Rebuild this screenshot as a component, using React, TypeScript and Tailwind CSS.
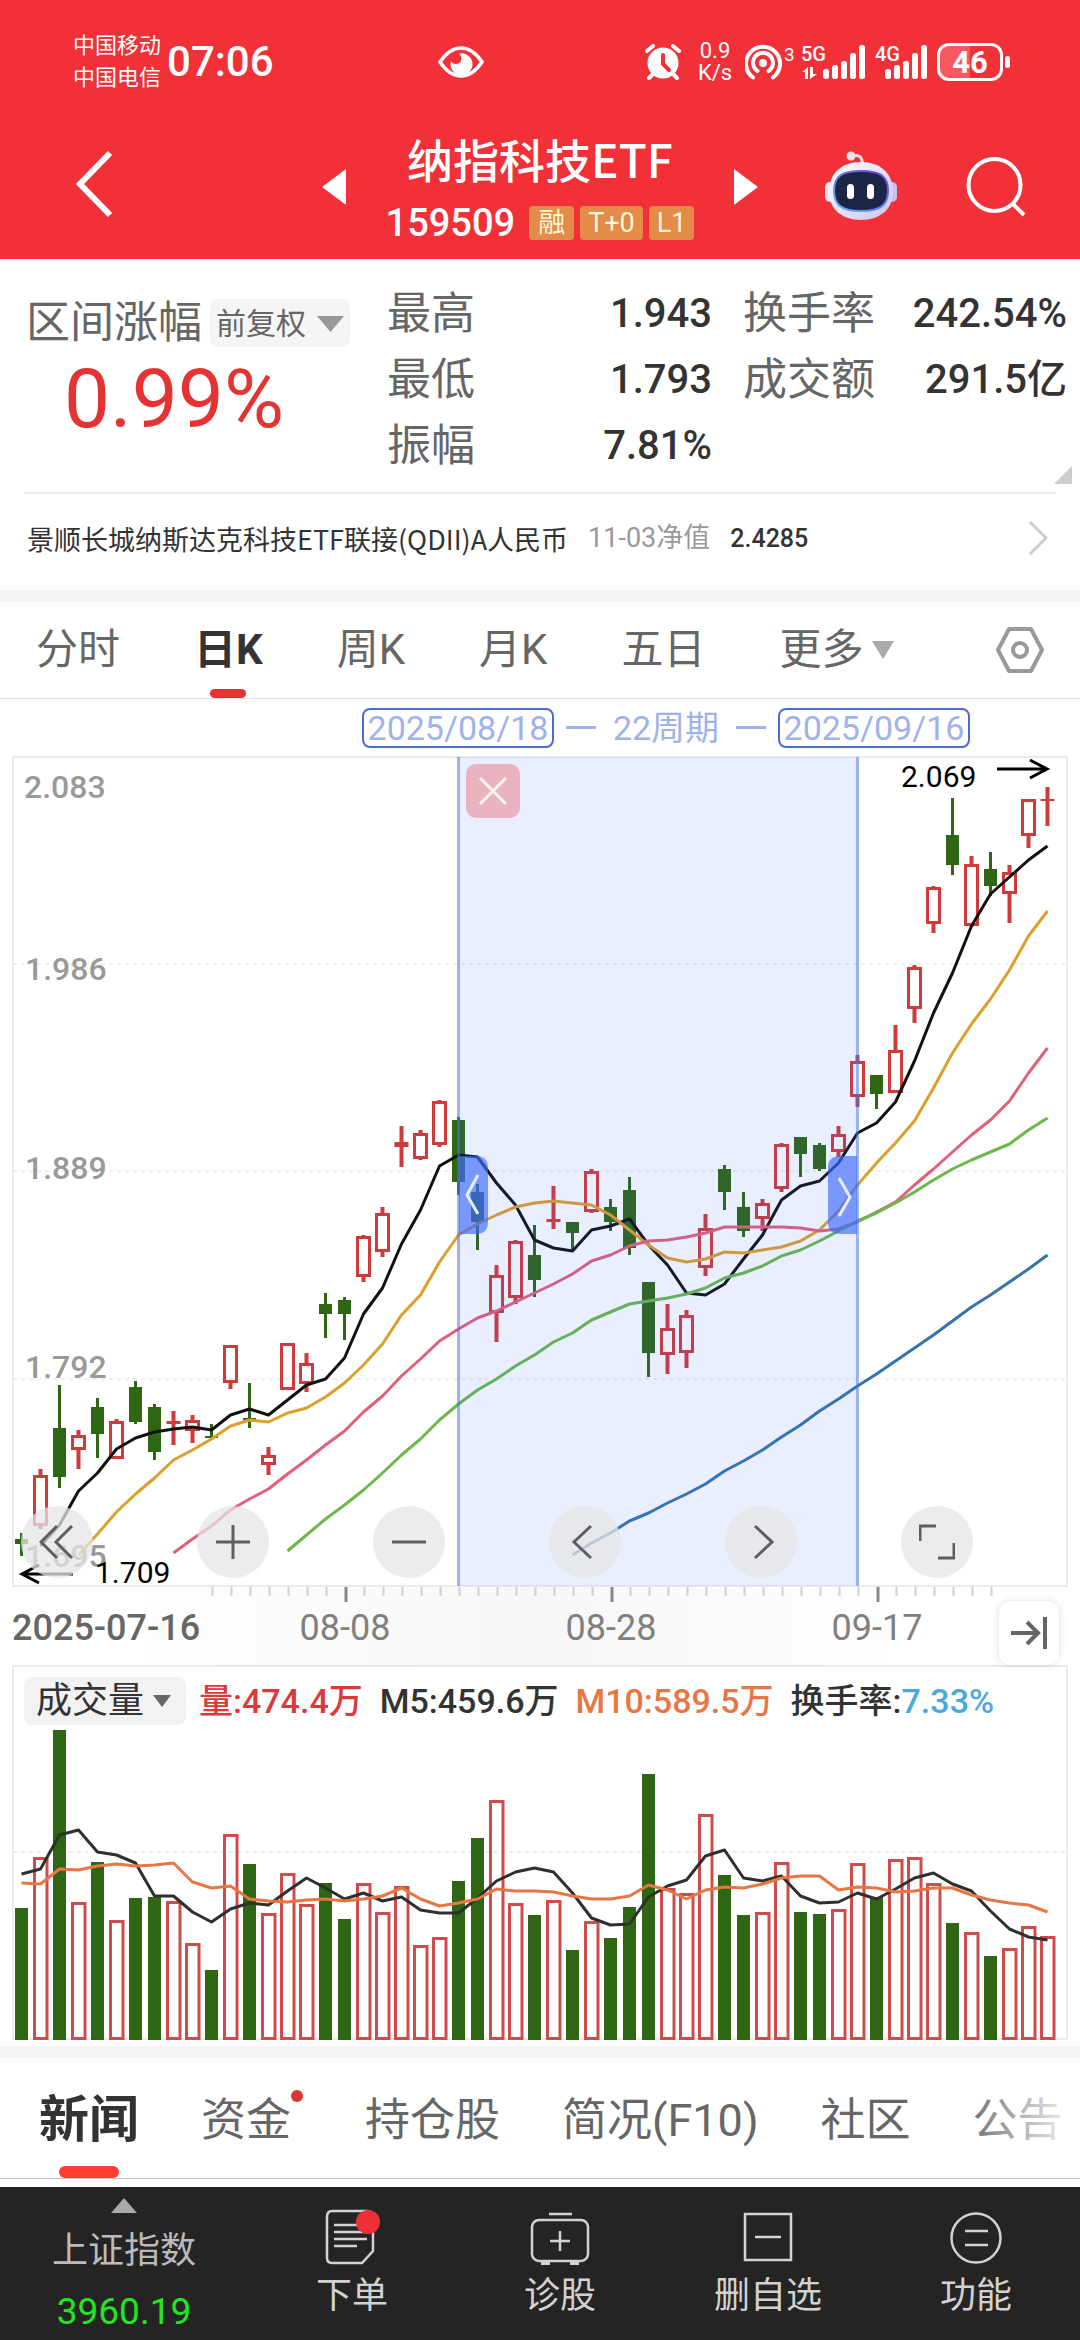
import React from 'react';

interface Candle {
    high: number;
    top: number;
    bottom: number;
    low: number;
    up: boolean;
    volume: number;
}

const UP = '#d03a3a';
const DOWN = '#2f6613';
const STEP = 19;
const FIRST = 21.5;

// high, body top, body bottom, low, rising, volume bar top
const rows: [number, number, number, number, number, number][] = [
    [777, 783, 788, 800, 0, 183],
    [713, 719, 770, 773, 1, 132],
    [629, 672, 721, 732, 0, 5],
    [674, 679, 694, 713, 1, 177],
    [642, 651, 678, 702, 0, 137],
    [663, 665, 703, 703, 1, 195],
    [625, 631, 666, 668, 0, 173],
    [648, 651, 696, 704, 0, 172],
    [655, 665, 668, 689, 1, 176],
    [659, 664, 675, 687, 1, 218],
    [668, 680, 682, 684, 0, 245],
    [589, 589, 627, 633, 1, 109],
    [627, 662, 664, 672, 0, 139],
    [691, 699, 709, 719, 1, 188],
    [587, 587, 634, 634, 1, 148],
    [597, 607, 628, 636, 1, 179],
    [537, 548, 558, 582, 0, 158],
    [541, 544, 558, 584, 0, 194],
    [479, 480, 521, 526, 1, 158],
    [451, 457, 496, 501, 1, 187],
    [370, 386, 391, 411, 1, 161],
    [374, 377, 403, 404, 1, 220],
    [344, 345, 389, 391, 1, 212],
    [361, 364, 426, 439, 0, 156],
    [428, 436, 466, 494, 0, 113],
    [509, 519, 557, 586, 1, 75],
    [484, 485, 542, 548, 1, 178],
    [469, 499, 524, 541, 0, 190],
    [430, 463, 466, 473, 1, 175],
    [466, 466, 477, 495, 0, 225],
    [413, 415, 456, 457, 1, 196],
    [443, 451, 466, 475, 0, 213],
    [421, 434, 492, 499, 0, 182],
    [526, 526, 597, 621, 0, 49],
    [548, 572, 599, 618, 1, 163],
    [554, 559, 597, 612, 1, 168],
    [458, 472, 512, 520, 1, 89],
    [409, 413, 436, 454, 0, 150],
    [436, 451, 475, 481, 0, 190],
    [443, 447, 463, 475, 1, 187],
    [387, 388, 433, 436, 1, 137],
    [381, 381, 398, 421, 0, 187],
    [387, 389, 413, 415, 0, 189],
    [370, 378, 396, 401, 1, 184],
    [299, 305, 341, 351, 1, 138],
    [319, 319, 338, 353, 0, 172],
    [269, 294, 337, 337, 1, 134],
    [209, 211, 253, 267, 1, 132],
    [130, 131, 168, 177, 1, 158],
    [42, 79, 109, 119, 0, 198],
    [100, 108, 170, 171, 1, 207],
    [96, 113, 130, 140, 0, 231],
    [109, 116, 138, 167, 1, 223],
    [43, 43, 80, 92, 1, 201],
    [31, 43, 45, 70, 1, 211],
];

const candles: Candle[] = rows.map(([high, top, bottom, low, up, volume]) => ({
    high,
    top,
    bottom,
    low,
    up: up === 1,
    volume,
}));

const averages = [
    {
        color: '#111111',
        start: 1,
        points: [
            790, 769, 735, 717, 693, 682, 676, 673, 671, 674, 659, 653, 659, 644, 629, 623, 602, 558, 532, 488, 454, 410,
            399, 401, 427, 449, 484, 492, 495, 474, 470, 463, 489, 509, 537, 539, 528, 503, 479, 444, 430, 425, 407, 377,
            367, 346, 305, 257, 217, 170, 138, 121, 104, 90,
        ],
    },
    {
        color: '#dd9f2b',
        start: 3,
        points: [
            799, 778, 756, 738, 722, 704, 694, 683, 670, 664, 666, 657, 652, 641, 627, 609, 588, 559, 539, 506, 479, 468,
            459, 451, 447, 445, 447, 449, 459, 474, 489, 502, 506, 503, 496, 497, 494, 491, 485, 474, 455, 429, 407, 387,
            365, 332, 297, 268, 243, 214, 180, 155,
        ],
    },
    {
        color: '#e0607a',
        start: 8,
        points: [
            797, 783, 770, 754, 743, 733, 718, 704, 689, 675, 656, 640, 620, 603, 585, 573, 562, 555, 546, 537, 528, 518,
            505, 499, 490, 485, 484, 481, 477, 471, 471, 471, 471, 472, 475, 473, 466, 456, 446, 429, 413, 396, 379, 364,
            345, 317, 292,
        ],
    },
    {
        color: '#6cb84c',
        start: 14,
        points: [
            795, 779, 763, 749, 734, 717, 699, 683, 664, 648, 634, 623, 610, 599, 586, 577, 564, 556, 548, 545, 542, 538,
            532, 522, 517, 510, 500, 494, 485, 475, 465, 457, 447, 436, 424, 413, 404, 396, 388, 374, 362,
        ],
    },
    {
        color: '#3674ab',
        start: 29,
        points: [
            799, 787, 777, 765, 757, 747, 738, 728, 715, 705, 694, 681, 669, 655, 643, 630, 618, 605, 592, 579, 565, 551,
            539, 526, 513, 499,
        ],
    },
];

const volumeAverages = [
    {
        color: '#2f2f2f',
        start: 0,
        points: [
            149, 144, 110, 105, 127, 130, 138, 171, 171, 187, 197, 184, 178, 180, 166, 153, 163, 174, 168, 176, 172, 185,
            188, 188, 173, 156, 147, 143, 147, 168, 193, 200, 199, 172, 161, 155, 131, 125, 153, 156, 151, 171, 178, 177,
            168, 174, 164, 153, 148, 159, 166, 186, 204, 212, 215,
        ],
    },
    {
        color: '#e87644',
        start: 0,
        points: [
            158, 159, 144, 145, 141, 139, 141, 140, 138, 157, 163, 161, 174, 176, 177, 175, 174, 176, 174, 171, 163, 174,
            181, 178, 174, 164, 166, 166, 167, 171, 174, 174, 171, 160, 165, 174, 165, 162, 163, 159, 153, 151, 151, 165,
            162, 163, 167, 166, 163, 163, 170, 175, 178, 180, 187,
        ],
    },
];

const xAt = (i: number) => FIRST + i * STEP;

const toPoints = (start: number, points: number[]) => points.map((y, i) => `${xAt(start + i)},${y}`).join(' ');

function SignalBars({ label, arrows = false }: { label: string; arrows?: boolean }) {
    const x = arrows ? 22 : 10;
    return (
        <svg className={arrows ? 'w-[66px] h-[40px]' : 'w-[54px] h-[40px]'} viewBox={arrows ? '0 0 66 40' : '0 0 54 40'} fill="white">
            <text x="0" y="19" fontSize="20" fontWeight="500">{label}</text>
            {arrows && <path d="M1 30l6-5v12H4v-7zM9 25h3v7h4l-7 5z" />}
            {[10, 14, 18, 26, 34].map((h, i) => (
                <rect key={h} x={x + i * 9} y={37 - h} width="6" height={h} rx="2.5" />
            ))}
        </svg>
    );
}

function StatusBar() {
    return (
        <div className="flex items-center h-[124px] pl-[73px] pr-[70px] text-white">
            <div className="text-[22px] leading-8">
                <p>中国移动</p>
                <p>中国电信</p>
            </div>
            <span className="ml-[6px] text-[42px] leading-none font-medium">07:06</span>
            <svg className="ml-[164px] w-[46px] h-[32px]" viewBox="0 0 46 32" fill="none">
                <path d="M2 16C8 7 15 2 23 2s15 5 21 14c-6 9-13 14-21 14S8 25 2 16z" stroke="white" strokeWidth="3.5" />
                <path d="M21 7.500a11 11 0 1 1-8 7.500c1 4 9 4 10 0 1-3 0-6-2-7.500z" fill="white" />
            </svg>
            <div className="ml-auto flex items-center">
                <svg className="w-[36px] h-[36px]" viewBox="0 0 36 36" fill="none" stroke="white" strokeLinecap="round">
                    <circle cx="18" cy="19" r="15.500" fill="white" stroke="none" />
                    <path d="M2 7l6-5M34 7l-6-5M4 34l5-5M32 34l-5-5" strokeWidth="4" />
                    <path d="M18 11v9l6 6" stroke="#f23038" strokeWidth="4" />
                </svg>
                <div className="ml-4 w-9 text-center text-[22px] leading-[22px]">
                    <p>0.9</p>
                    <p>K/s</p>
                </div>
                <svg className="ml-3 w-[56px] h-[40px]" viewBox="0 0 56 40" fill="none" stroke="white" strokeWidth="4" strokeLinecap="round">
                    <circle cx="18" cy="21" r="4" fill="white" stroke="none" />
                    <path d="M12.500 29a10 10 0 1 1 11 0M8 35.500a17 17 0 1 1 20 0" />
                    <text x="39" y="19" fontSize="19" fill="white" stroke="none">3</text>
                </svg>
                <SignalBars label="5G" arrows />
                <span className="w-2" />
                <SignalBars label="4G" />
                <div className="ml-2 relative flex items-center justify-center w-[66px] h-[38px] rounded-xl border-3 border-white overflow-hidden bg-linear-to-r from-white/20 from-50% to-transparent to-50% text-[31px] leading-none font-bold">
                    46
                </div>
                <span className="w-[5px] h-3 ml-[2px] rounded-sm bg-white" />
            </div>
        </div>
    );
}

function Header() {
    return (
        <header className="bg-[#f23038]">
            <StatusBar />
            <div className="grid grid-cols-[1fr_auto_1fr] items-center h-[135px] pb-4 text-white">
                <button type="button" aria-label="返回" className="ml-[75px] justify-self-start">
                    <svg className="w-[38px] h-[68px]" viewBox="0 0 38 68" fill="none" stroke="white" strokeWidth="6">
                        <path d="M35 3L5 34l30 31" />
                    </svg>
                </button>
                <div className="flex items-center gap-10 pt-[6px]">
                    <button type="button" aria-label="上一只">
                        <svg className="w-6 h-9" viewBox="0 0 24 36" fill="white"><path d="M24 0v36L0 18z" /></svg>
                    </button>
                    <div className="flex flex-col items-center gap-[22px]">
                        <h1 className="font-['Noto_Sans_CJK_SC',sans-serif] text-[46px] leading-[50px] font-medium">纳指科技ETF</h1>
                        <div className="flex items-center gap-[6px]">
                            <span className="mr-2 text-[38px] leading-9 font-medium">159509</span>
                            <span className="px-[9px] rounded bg-[#e28c48] text-[#fff6dc] text-[27px] leading-[34px]">融</span>
                            <span className="px-2 rounded bg-[#e28c48] text-[#fff6dc] text-[27px] leading-[34px]">T+0</span>
                            <span className="px-2 rounded bg-[#e28c48] text-[#fff6dc] text-[27px] leading-[34px]">L1</span>
                        </div>
                    </div>
                    <button type="button" aria-label="下一只">
                        <svg className="w-6 h-9" viewBox="0 0 24 36" fill="white"><path d="M0 0v36l24-18z" /></svg>
                    </button>
                </div>
                <div className="flex items-center justify-between pl-[67px] pr-[54px] pt-1">
                    <button type="button" aria-label="智能助手">
                        <svg className="w-[72px] h-[70px]" viewBox="0 0 72 70" fill="none">
                            <defs>
                                <linearGradient id="shell" x1="0" y1="0" x2="1" y2="1">
                                    <stop offset="0" stopColor="#ffffff" />
                                    <stop offset="1" stopColor="#c9c6f2" />
                                </linearGradient>
                                <linearGradient id="rim" x1="0" y1="1" x2="1" y2="0">
                                    <stop offset="0" stopColor="#5fb4f5" />
                                    <stop offset="1" stopColor="#6a3fd8" />
                                </linearGradient>
                            </defs>
                            <path d="M27 5c8-2 11 2 10 9" stroke="#eedff0" strokeWidth="3" />
                            <circle cx="26" cy="5" r="4.500" fill="#f5dde8" />
                            <rect x="0" y="31" width="10" height="20" rx="5" fill="#e4e6fb" />
                            <rect x="62" y="31" width="10" height="20" rx="5" fill="#cdbdf0" />
                            <path d="M36 11c20 0 32 12 32 30 0 17-13 28-32 28S4 58 4 41c0-18 12-30 32-30z" fill="url(#shell)" />
                            <path d="M36 20c19 0 27 5 27 20s-9 20-27 20-27-5-27-20 8-20 27-20z" fill="#1d2547" stroke="url(#rim)" strokeWidth="2" />
                            <rect x="22" y="33" width="7" height="15" rx="3.500" fill="white" />
                            <rect x="42" y="33" width="7" height="15" rx="3.500" fill="white" />
                        </svg>
                    </button>
                    <button type="button" aria-label="搜索">
                        <svg className="w-[60px] h-[62px]" viewBox="0 0 60 62" fill="none" stroke="white" strokeWidth="4">
                            <circle cx="28.500" cy="30" r="26" />
                            <path d="M47 49l11 11" />
                        </svg>
                    </button>
                </div>
            </div>
        </header>
    );
}

function Stat({ label, value }: { label: string; value: string }) {
    return (
        <div className="flex items-center justify-between h-[66px]">
            <dt className="text-[44px] leading-none text-[#666]">{label}</dt>
            <dd className="text-[40px] leading-none font-medium text-[#333]">{value}</dd>
        </div>
    );
}

function Summary() {
    return (
        <section className="bg-white">
            <div className="relative flex items-start pl-[26px] pr-[13px] pt-[22px] h-[233px]">
                <div className="w-[324px] pt-[18px]">
                    <div className="flex items-center justify-between">
                        <span className="text-[44px] leading-[46px] text-[#666]">区间涨幅</span>
                        <div className="relative">
                            <select aria-label="复权方式" className="appearance-none w-[140px] h-12 pl-[6px] rounded-lg bg-[#f5f5f5] text-[30px] text-[#666]">
                                <option>前复权</option>
                            </select>
                            <svg className="absolute right-[6px] top-[17px] w-[27px] h-4 pointer-events-none" viewBox="0 0 27 16" fill="#999">
                                <path d="M0 0h27L13.500 16z" />
                            </svg>
                        </div>
                    </div>
                    <p className="mt-[14px] pr-7 text-center text-[82px] leading-[76px] text-[#e33333]">0.99%</p>
                </div>
                <dl className="w-[325px] ml-[37px]">
                    <Stat label="最高" value="1.943" />
                    <Stat label="最低" value="1.793" />
                    <Stat label="振幅" value="7.81%" />
                </dl>
                <dl className="flex-1 ml-[31px]">
                    <Stat label="换手率" value="242.54%" />
                    <Stat label="成交额" value="291.5亿" />
                </dl>
                <svg className="absolute right-2 bottom-2 w-[18px] h-[18px]" viewBox="0 0 18 18" fill="#ccc"><path d="M18 0v18H0z" /></svg>
            </div>
            <a href="#fund" className="flex items-center h-[98px] mx-6 border-t-2 border-[#ececec] pl-[3px] pr-2 pb-2 text-[27px] leading-none">
                <span className="font-['Noto_Sans_CJK_SC',sans-serif] text-[#333]">景顺长城纳斯达克科技ETF联接(QDII)A人民币</span>
                <span className="ml-5 text-[#999]">11-03净值</span>
                <span className="ml-5 text-[25px] font-medium text-[#333]">2.4285</span>
                <svg className="ml-auto w-5 h-9" viewBox="0 0 20 36" fill="none" stroke="#ccc" strokeWidth="3"><path d="M2 2l16 16L2 34" /></svg>
            </a>
        </section>
    );
}

function PeriodTabs() {
    return (
        <nav className="flex items-center h-[97px] pl-9 pr-9 gap-[74px] border-b border-[#e2e2e2] text-[42px] leading-none whitespace-nowrap text-[#666]">
            <button type="button">分时</button>
            <button type="button" className="relative flex flex-col items-center justify-center h-full font-bold text-[#333]">
                日K
                <span className="absolute bottom-0 w-9 h-[9px] rounded-full bg-[#e33333]" />
            </button>
            <button type="button">周K</button>
            <button type="button">月K</button>
            <button type="button">五日</button>
            <button type="button" className="flex items-center gap-2">
                更多
                <svg className="w-6 h-5" viewBox="0 0 24 20" fill="#aaa"><path d="M1 1h22L12 19z" /></svg>
            </button>
            <button type="button" aria-label="设置" className="ml-auto">
                <svg className="w-12 h-12" viewBox="0 0 48 48" fill="none" stroke="#999" strokeWidth="4" strokeLinejoin="round">
                    <path d="M13 3h22l11 21-11 21H13L2 24z" />
                    <circle cx="24" cy="24" r="7" />
                </svg>
            </button>
        </nav>
    );
}

function RangeBar() {
    return (
        <div className="flex items-center h-[57px] pl-[362px] gap-3 text-[34px] leading-none text-[#9fb2ea]">
            <button type="button" className="w-[192px] h-10 rounded-lg border-2 border-[#4a6ccb]">2025/08/18</button>
            <span className="w-[30px] h-[3px] bg-[#9fb2ea]" />
            <span className="w-[116px] text-center">22周期</span>
            <span className="w-[30px] h-[3px] bg-[#9fb2ea]" />
            <button type="button" className="w-[192px] h-10 rounded-lg border-2 border-[#4a6ccb]">2025/09/16</button>
        </div>
    );
}

function CandleShape({ candle, x }: { candle: Candle; x: number }) {
    const { high, top, bottom, low, up } = candle;
    if (!up) {
        return (
            <g fill={DOWN}>
                <rect x={x - 1.5} y={high} width="3" height={low - high} />
                <rect x={x - 6.5} y={top} width="13" height={bottom - top} />
            </g>
        );
    }
    // a thin body is drawn as a cross
    if (bottom - top < 6) {
        return (
            <g fill={UP}>
                <rect x={x - 2} y={high} width="4" height={low - high} />
                <rect x={x - 7} y={top} width="14" height={bottom - top} />
            </g>
        );
    }
    return (
        <g fill={UP}>
            <rect x={x - 2} y={high} width="4" height={top - high} />
            <rect x={x - 2} y={bottom} width="4" height={low - bottom} />
            <rect x={x - 6} y={top + 1.5} width="12" height={bottom - top - 3} fill="none" stroke={UP} strokeWidth="3" />
        </g>
    );
}

function PriceChart() {
    return (
        <div className="relative">
            <svg className="block w-full" viewBox="0 0 1080 831" fill="none">
                <rect x="13" y="1" width="1054" height="829" stroke="#ebebeb" strokeWidth="2" />
                {[208, 415, 623].map((y) => (
                    <path key={y} d={`M13 ${y}H1067`} stroke="#dfdfdf" strokeDasharray="4 4" />
                ))}
                <g fill="#999" fontSize="32" fontWeight="500">
                    <text x="24" y="42">2.083</text>
                    <text x="25" y="224">1.986</text>
                    <text x="25" y="423">1.889</text>
                    <text x="25" y="622">1.792</text>
                    <text x="25" y="811">1.695</text>
                </g>
                {candles.map((candle, i) => (
                    <CandleShape key={i} candle={candle} x={xAt(i)} />
                ))}
                {averages.map((line) => (
                    <polyline key={line.color} points={toPoints(line.start, line.points)} stroke={line.color} strokeWidth="3" strokeLinejoin="round" />
                ))}
                <g fill="black" fontSize="30">
                    <text x="901" y="31">2.069</text>
                    <text x="95" y="827">1.709</text>
                </g>
                <path d="M997 13h50M1030 4l17 9-17 9M73 818H22M39 809l-17 9 17 9" stroke="black" strokeWidth="3" />

                {/* Selected range */}
                <rect x="458" y="1" width="400" height="829" fill="#3c6eff" fillOpacity="0.11" />
                <path d="M458.500 1v829M857.500 1v829" stroke="#4474e6" strokeOpacity="0.5" strokeWidth="3" />
                <path d="M459 400h17q12 0 12 12v54q0 12-12 12h-17z" fill="#3c68ff" fillOpacity="0.65" />
                <path d="M857 400h-17q-12 0-12 12v54q0 12 12 12h17z" fill="#3c68ff" fillOpacity="0.65" />
                <path d="M478 419l-11 20 11 19M839 422l11 19-11 19" stroke="#e6edff" strokeWidth="3" />
            </svg>
            <button type="button" aria-label="关闭区间" className="absolute left-[466px] top-2 flex items-center justify-center size-[54px] rounded-[10px] bg-[#e9b4c0]">
                <svg className="size-7" viewBox="0 0 28 28" stroke="#fff4ee" strokeWidth="3"><path d="M1 1l26 26M27 1L1 27" /></svg>
            </button>
            <div className="absolute left-[21px] bottom-[9px] flex gap-[104px]">
                {controls.map(({ label, path }) => (
                    <button key={label} type="button" aria-label={label} className="flex items-center justify-center size-[72px] rounded-full bg-[#e5e5e5]/75">
                        <svg className="size-9" viewBox="0 0 36 36" fill="none" stroke="#5e5e5e" strokeWidth="3">
                            <path d={path} />
                        </svg>
                    </button>
                ))}
            </div>
        </div>
    );
}

const controls = [
    { label: '最早', path: 'M18 2L2 18l16 16M33 2L17 18l16 16' },
    { label: '放大', path: 'M18 1v34M1 18h34' },
    { label: '缩小', path: 'M1 18h34' },
    { label: '左移', path: 'M24 2L7 18l17 16' },
    { label: '右移', path: 'M12 2l17 16-17 16' },
    { label: '全屏', path: 'M17 2H1v15M19 34h16V19' },
];

function TimeAxis() {
    const ticks = Array.from({ length: 42 }, (_, i) => i + 10);
    return (
        <div className="relative bg-linear-to-r from-white from-10% via-[#f7f7f7] to-white to-85%">
            <svg className="block w-full" viewBox="0 0 1080 78">
                {ticks.map((i) =>
                    [17, 31, 45].includes(i) ? (
                        <rect key={i} x={xAt(i)} y="0" width="3" height="15" fill="#888" />
                    ) : (
                        <rect key={i} x={xAt(i)} y="0" width="2" height="9" fill="#d0d0d0" />
                    ),
                )}
                <text x="12" y="53" fontSize="36" fontWeight="500" fill="#666">2025-07-16</text>
                <g fontSize="36" fill="#808080" textAnchor="middle">
                    <text x="345" y="53">08-08</text>
                    <text x="611" y="53">08-28</text>
                    <text x="877" y="53">09-17</text>
                </g>
            </svg>
            <button type="button" aria-label="跳到最新" className="absolute right-[21px] top-[14px] flex items-center justify-center w-[60px] h-[64px] rounded-xl bg-white shadow-[0_0_8px_rgba(0,0,0,0.12)]">
                <svg className="w-9 h-8" viewBox="0 0 36 32" fill="none" stroke="#666" strokeWidth="4">
                    <path d="M0 16h26M16 5l11 11-11 11M34 0v32" />
                </svg>
            </button>
        </div>
    );
}

function VolumeChart() {
    return (
        <section className="pb-[6px]">
            <div className="mx-[12px] h-[60px] flex items-end border-t-2 border-x-2 border-[#ebebeb] pl-[10px] text-[34px] leading-[48px] font-medium whitespace-nowrap text-[#333]">
                <div className="relative">
                    <select aria-label="指标" className="appearance-none block w-[162px] h-12 pl-3 rounded-lg bg-[#f2f2f2] text-[36px] font-normal">
                        <option>成交量</option>
                    </select>
                    <svg className="absolute right-[15px] top-[18px] w-[18px] h-3 pointer-events-none" viewBox="0 0 18 12" fill="#666">
                        <path d="M0 0h18L9 12z" />
                    </svg>
                </div>
                <span className="ml-[13px] text-[#d93a3a]">量:474.4万</span>
                <span className="ml-[17px]">M5:459.6万</span>
                <span className="ml-[17px] text-[#e87644]">M10:589.5万</span>
                <span className="ml-[17px]">换手率:<span className="text-[#4ba8dd]">7.33%</span></span>
            </div>
            <svg className="block w-full" viewBox="0 0 1080 315" fill="none">
                <path d="M13 0v314h1054V0" stroke="#ebebeb" strokeWidth="2" />
                <path d="M13 127H1067" stroke="#dcdcdc" strokeDasharray="4 4" />
                {candles.map(({ up, volume }, i) =>
                    up ? (
                        <rect key={i} x={xAt(i) - 6} y={volume + 1.5} width="12.500" height={312 - volume} stroke="#cf4c4c" strokeWidth="3" />
                    ) : (
                        <rect key={i} x={xAt(i) - 6.5} y={volume} width="13" height={315 - volume} fill={DOWN} />
                    ),
                )}
                {volumeAverages.map((line) => (
                    <polyline key={line.color} points={toPoints(line.start, line.points)} stroke={line.color} strokeWidth="3" strokeLinejoin="round" />
                ))}
            </svg>
        </section>
    );
}

function SectionTabs() {
    return (
        <nav className="relative flex items-center h-[121px] pl-[39px] pt-1 gap-[62px] overflow-hidden whitespace-nowrap border-b border-[#c4c4c4] text-[45px] leading-none text-[#666]">
            <button type="button" className="relative flex items-center justify-center h-full text-[50px] font-bold text-[#333]">
                新闻
                <span className="absolute bottom-0 w-[60px] h-3 rounded-full bg-[#fc3d32]" />
            </button>
            <button type="button" className="relative mr-3">
                资金
                <span className="absolute -right-3 -top-2 size-3 rounded-full bg-[#dd3333]" />
            </button>
            <button type="button">持仓股</button>
            <button type="button">简况(F10)</button>
            <button type="button">社区</button>
            <button type="button">公告</button>
            <span className="absolute right-0 top-0 w-[120px] h-full bg-linear-to-r from-white/0 to-white pointer-events-none" />
        </nav>
    );
}

function BottomBar() {
    return (
        <footer className="mt-2 flex h-[153px] bg-[#242424] text-[36px] leading-none text-[#d2d2d2]">
            <button type="button" className="flex flex-col items-center w-[248px] pt-[11px] text-[#bbb]">
                <svg className="w-[26px] h-[15px]" viewBox="0 0 26 15" fill="#aaa"><path d="M13 0l13 15H0z" /></svg>
                <span className="mt-5">上证指数</span>
                <span className="mt-6 text-[37px] text-[#22e622]">3960.19</span>
            </button>
            <div className="flex-1 grid grid-cols-4">
                {actions.map(({ label, icon }) => (
                    <button key={label} type="button" className="flex flex-col items-center pt-[21px]">
                        <svg className="w-[60px] h-[58px]" viewBox="0 0 60 58" fill="none" stroke="#d2d2d2" strokeWidth="2.500">
                            {icon}
                        </svg>
                        <span className="mt-3">{label}</span>
                    </button>
                ))}
            </div>
        </footer>
    );
}

const actions = [
    {
        label: '下单',
        icon: (
            <>
                <path d="M10 3h35q6 0 6 6v34L40 55H10q-5 0-5-5V9q0-6 5-6z" />
                <path d="M12 17h26M12 24h33M12 31h33M12 38h23" />
                <circle cx="46" cy="14" r="12" fill="#ee3033" stroke="none" />
            </>
        ),
    },
    {
        label: '诊股',
        icon: (
            <>
                <rect x="2" y="12" width="56" height="41" rx="7" />
                <path d="M19 6h23M30 23v20M20 33h20" />
                <path d="M11 55h9M40 55h9" strokeWidth="4" />
            </>
        ),
    },
    {
        label: '删自选',
        icon: (
            <>
                <rect x="7" y="6" width="46" height="46" />
                <path d="M17 29h26" />
            </>
        ),
    },
    {
        label: '功能',
        icon: (
            <>
                <circle cx="30" cy="30" r="24.500" />
                <path d="M19 23h23M19 37h23" />
            </>
        ),
    },
];

export default function App() {
    return (
        <div className="bg-white font-['Roboto','Noto_Sans_CJK_SC',sans-serif]">
            <Header />
            <Summary />
            <div className="h-3 bg-[#f4f4f4]" />
            <main>
                <PeriodTabs />
                <RangeBar />
                <PriceChart />
                <TimeAxis />
                <VolumeChart />
            </main>
            <div className="h-3 bg-[#f4f4f4]" />
            <SectionTabs />
            <BottomBar />
        </div>
    );
}
